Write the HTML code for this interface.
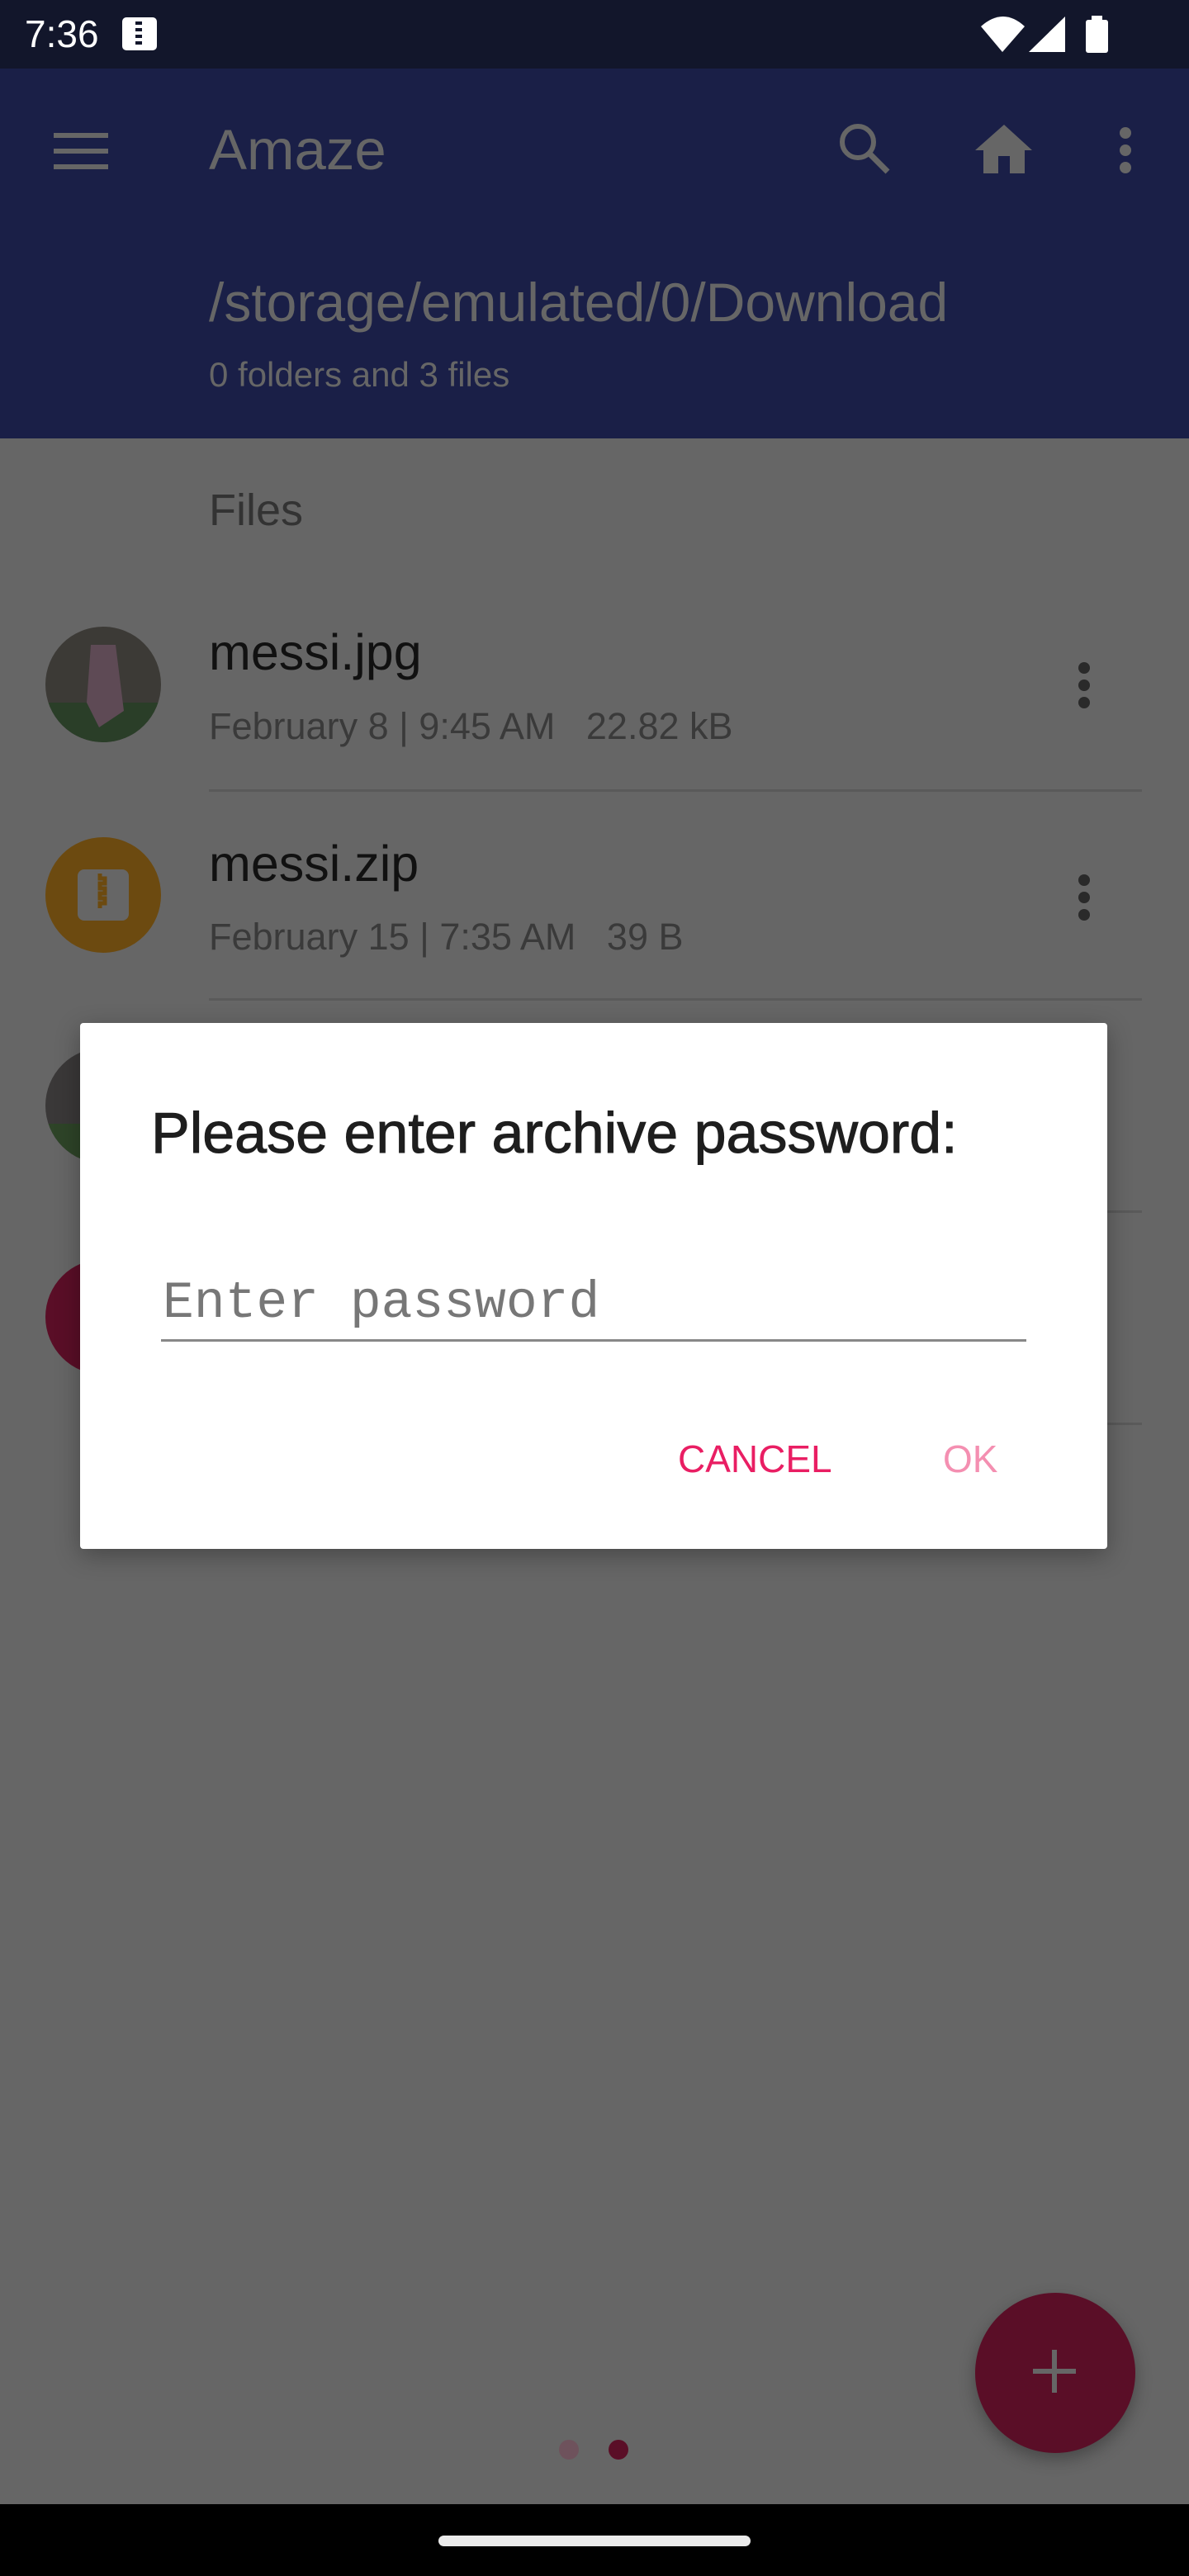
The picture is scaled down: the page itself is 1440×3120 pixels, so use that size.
<!DOCTYPE html>
<html><head><meta charset="utf-8"><style>
*{margin:0;padding:0;box-sizing:border-box}
body{width:1440px;height:3120px;position:relative;overflow:hidden;background:#666;font-family:"Liberation Sans",sans-serif}
.a{position:absolute;white-space:nowrap}
</style></head><body>
<div class="a" style="left:0;top:0;width:1440px;height:83px;background:#12162b"></div>
<div class="a" style="left:0;top:83px;width:1440px;height:448px;background:#1a1f47"></div>
<div class="a" style="left:30px;top:14px;font-size:46px;color:#fff;line-height:54px">7:36</div>
<div class="a" style="left:148px;top:21px;width:42px;height:40px;background:#fff;border-radius:5px"></div>
<div class="a" style="left:164px;top:26px;width:8px;height:30px;background:repeating-linear-gradient(#12162b 0 4px,#fff 4px 8px)"></div>
<svg class="a" style="left:0;top:0" width="1440" height="531">
<path d="M1188 32 Q1215 8 1241 32 L1214 63 Z" fill="#fff"/>
<path d="M1246 63 L1290 20 L1290 63 Z" fill="#fff"/>
<rect x="1315" y="24" width="27" height="40" rx="3" fill="#fff"/><rect x="1322" y="19" width="13" height="6" fill="#fff"/>
<rect x="65" y="161" width="66" height="6" fill="#666"/><rect x="65" y="180" width="66" height="6" fill="#666"/><rect x="65" y="199" width="66" height="6" fill="#666"/>
<circle cx="1039" cy="172" r="19" fill="none" stroke="#666" stroke-width="6"/><path d="M1053 186 L1075 208" stroke="#666" stroke-width="7"/>
<path d="M1216 151 L1250 182 L1241 182 L1241 210 L1223 210 L1223 189 L1209 189 L1209 210 L1191 210 L1191 182 L1181 182 Z" fill="#666"/>
<circle cx="1363" cy="161" r="7" fill="#666"/><circle cx="1363" cy="182" r="7" fill="#666"/><circle cx="1363" cy="203" r="7" fill="#666"/>
</svg>
<div class="a" style="left:253px;top:142px;font-size:69px;color:#666;line-height:80px">Amaze</div>
<div class="a" style="left:253px;top:328px;font-size:66px;color:#666;line-height:76px">/storage/emulated/0/Download</div>
<div class="a" style="left:253px;top:431px;font-size:42px;color:#666;line-height:46px">0 folders and 3 files</div>

<div class="a" style="left:253px;top:587px;font-size:54px;color:#333;line-height:62px">Files</div>

<svg class="a" style="left:0;top:531px" width="1440" height="1300">
<defs><clipPath id="c1"><circle cx="125" cy="298" r="70"/></clipPath><clipPath id="c3"><circle cx="125" cy="808" r="70"/></clipPath></defs>
<g clip-path="url(#c1)"><rect x="55" y="228" width="140" height="140" fill="#3c3a36"/><rect x="55" y="320" width="140" height="50" fill="#2a3e28"/><path d="M110 250 L140 250 L150 330 L120 350 L105 320Z" fill="#5e4a55"/></g>
<rect x="253" y="425" width="1130" height="3" fill="#5a5a5a"/>
<circle cx="125" cy="553" r="70" fill="#6c4a10"/><rect x="94" y="522" width="62" height="62" rx="8" fill="#666"/><path d="M121 527 v6 h6 v6 h-6 v6 h6 v6 h-6 v6 h6 v6 h-6 v6" stroke="#6c4a10" stroke-width="5" fill="none"/>
<rect x="253" y="678" width="1130" height="3" fill="#5a5a5a"/>
<g clip-path="url(#c3)"><rect x="55" y="738" width="140" height="140" fill="#3a3838"/><rect x="55" y="830" width="140" height="50" fill="#2e4428"/></g>
<rect x="253" y="935" width="1130" height="3" fill="#5a5a5a"/>
<circle cx="125" cy="1064" r="70" fill="#5a0e27"/>
<rect x="253" y="1192" width="1130" height="3" fill="#5a5a5a"/>
</svg>
<svg class="a" style="left:1304px;top:800px" width="18" height="1000">
<circle cx="9" cy="9" r="7" fill="#2a2a2a"/><circle cx="9" cy="30" r="7" fill="#2a2a2a"/><circle cx="9" cy="51" r="7" fill="#2a2a2a"/>
<circle cx="9" cy="266" r="7" fill="#2a2a2a"/><circle cx="9" cy="287" r="7" fill="#2a2a2a"/><circle cx="9" cy="308" r="7" fill="#2a2a2a"/>
</svg>
<div class="a" style="left:253px;top:756px;font-size:61px;color:#111;line-height:68px">messi.jpg</div>
<div class="a" style="left:253px;top:855px;font-size:45px;color:#3a3a3a;line-height:50px">February 8 | 9:45 AM &nbsp; 22.82 kB</div>
<div class="a" style="left:253px;top:1012px;font-size:61px;color:#111;line-height:68px">messi.zip</div>
<div class="a" style="left:253px;top:1110px;font-size:45px;color:#3a3a3a;line-height:50px">February 15 | 7:35 AM &nbsp; 39 B</div>

<div class="a" style="left:97px;top:1239px;width:1244px;height:637px;background:#fff;border-radius:4px;box-shadow:0 8px 30px rgba(0,0,0,.3)"></div>
<div class="a" style="left:183px;top:1332px;font-size:70px;color:#1e1e1e;line-height:80px;-webkit-text-stroke:1px #1e1e1e">Please enter archive password:</div>
<div class="a" style="left:197px;top:1542px;font-family:'Liberation Mono',monospace;font-size:63px;color:#777;line-height:74px">Enter password</div>
<div class="a" style="left:195px;top:1622px;width:1048px;height:3px;background:#888"></div>
<div class="a" style="left:821px;top:1742px;font-size:46px;color:#e91e63;line-height:50px">CANCEL</div>
<div class="a" style="left:1142px;top:1742px;font-size:46px;color:#f48fb1;line-height:50px">OK</div>

<div class="a" style="left:1181px;top:2777px;width:194px;height:194px;border-radius:50%;background:#5a0e27;box-shadow:0 8px 20px rgba(0,0,0,.3)"></div>
<div class="a" style="left:1251px;top:2869px;width:52px;height:6px;background:#666"></div>
<div class="a" style="left:1274px;top:2846px;width:6px;height:52px;background:#666"></div>
<div class="a" style="left:677px;top:2955px;width:24px;height:24px;border-radius:50%;background:#6e525c"></div>
<div class="a" style="left:737px;top:2955px;width:24px;height:24px;border-radius:50%;background:#5a0e27"></div>
<div class="a" style="left:0;top:3033px;width:1440px;height:87px;background:#000"></div>
<div class="a" style="left:531px;top:3071px;width:378px;height:13px;border-radius:7px;background:#ebebeb"></div>
</body></html>
